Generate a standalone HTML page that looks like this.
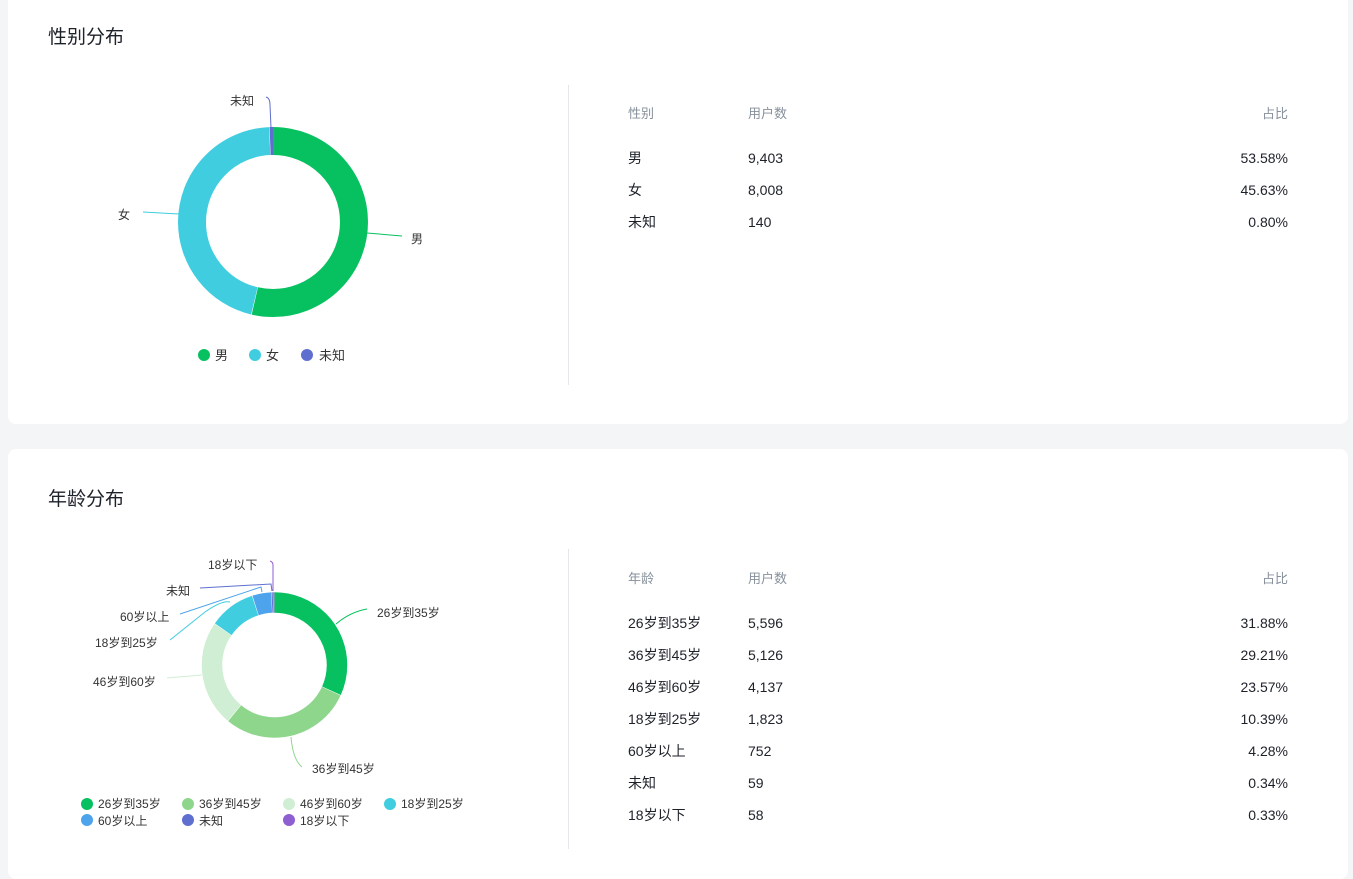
<!DOCTYPE html>
<html><head><meta charset="utf-8"><style>
body{margin:0;background:#f4f5f7;font-family:"Liberation Sans","Noto Sans CJK SC",sans-serif;width:1353px;height:868px;overflow:hidden;position:relative}
.card{position:absolute;left:8px;width:1340px;background:#fff;border-radius:8px}
.t{position:absolute;left:40px;font-size:19px;color:#1d2129}
.div{position:absolute;left:560px;width:1px;background:#e5e6eb}
.tb{position:absolute;left:620px;width:660px;font-size:14px;color:#1d2129}
.r{position:absolute;left:0;width:660px;height:20px;line-height:20px}
.r span{position:absolute}
.r .a{left:0}.r .b{left:120px}.r .c{right:0}
.h{color:#86909c;font-size:13px}
svg{position:absolute;left:0;top:0}
svg text{font-family:"Liberation Sans","Noto Sans CJK SC",sans-serif;font-size:12px;fill:#333}
</style></head><body>
<div class="card" style="top:-10px;height:434px">
<div class="t" style="top:32px">性别分布</div>
<div class="div" style="top:95px;height:300px"></div>
<div class="tb" style="top:114px">
<div class="r h" style="top:0"><span class="a">性别</span><span class="b">用户数</span><span class="c">占比</span></div>
<div class="r" style="top:44px"><span class="a">男</span><span class="b">9,403</span><span class="c">53.58%</span></div>
<div class="r" style="top:76px"><span class="a">女</span><span class="b">8,008</span><span class="c">45.63%</span></div>
<div class="r" style="top:108px"><span class="a">未知</span><span class="b">140</span><span class="c">0.80%</span></div>
</div>
</div>
<div class="card" style="top:449px;height:430px">
<div class="t" style="top:35px">年龄分布</div>
<div class="div" style="top:100px;height:300px"></div>
<div class="tb" style="top:120px">
<div class="r h" style="top:0"><span class="a">年龄</span><span class="b">用户数</span><span class="c">占比</span></div>
<div class="r" style="top:44px"><span class="a">26岁到35岁</span><span class="b">5,596</span><span class="c">31.88%</span></div>
<div class="r" style="top:76px"><span class="a">36岁到45岁</span><span class="b">5,126</span><span class="c">29.21%</span></div>
<div class="r" style="top:108px"><span class="a">46岁到60岁</span><span class="b">4,137</span><span class="c">23.57%</span></div>
<div class="r" style="top:140px"><span class="a">18岁到25岁</span><span class="b">1,823</span><span class="c">10.39%</span></div>
<div class="r" style="top:172px"><span class="a">60岁以上</span><span class="b">752</span><span class="c">4.28%</span></div>
<div class="r" style="top:204px"><span class="a">未知</span><span class="b">59</span><span class="c">0.34%</span></div>
<div class="r" style="top:236px"><span class="a">18岁以下</span><span class="b">58</span><span class="c">0.33%</span></div>
</div>
</div>
<svg width="1353" height="868">
<g transform="rotate(-90 273 222)" fill="none" stroke-width="28">
<circle cx="273" cy="222" r="81" stroke="#07c160" stroke-dasharray="272.7 508.9" stroke-dashoffset="0"/>
<circle cx="273" cy="222" r="81" stroke="#40cde0" stroke-dasharray="232.2 508.9" stroke-dashoffset="-273.2"/>
<circle cx="273" cy="222" r="81" stroke="#5f6fcf" stroke-dasharray="3.1 508.9" stroke-dashoffset="-505.8"/>
</g>
<path d="M367 233 L402 236" stroke="#07c160" fill="none"/>
<path d="M179 214 L143 212" stroke="#40cde0" fill="none"/>
<path d="M271 128 L270 105 Q270 98 266 97" stroke="#5f6fcf" fill="none"/>
<text x="411" y="243">男</text><text x="118" y="219">女</text><text x="230" y="105">未知</text>
<circle cx="204" cy="355" r="6" fill="#07c160"/><text x="215" y="360" style="font-size:13px">男</text>
<circle cx="255" cy="355" r="6" fill="#40cde0"/><text x="266" y="360" style="font-size:13px">女</text>
<circle cx="307" cy="355" r="6" fill="#5f6fcf"/><text x="319" y="360" style="font-size:13px">未知</text>

<g transform="rotate(-90 274.5 665)" fill="none" stroke-width="20.5">
<circle cx="274.5" cy="665" r="62.5" stroke="#07c160" stroke-dasharray="124.7 392.7"/>
<circle cx="274.5" cy="665" r="62.5" stroke="#8fd68d" stroke-dasharray="114.2 392.7" stroke-dashoffset="-125.2"/>
<circle cx="274.5" cy="665" r="62.5" stroke="#d0eed3" stroke-dasharray="92.1 392.7" stroke-dashoffset="-239.9"/>
<circle cx="274.5" cy="665" r="62.5" stroke="#40cde0" stroke-dasharray="40.3 392.7" stroke-dashoffset="-332.5"/>
<circle cx="274.5" cy="665" r="62.5" stroke="#4ea4ec" stroke-dasharray="16.3 392.7" stroke-dashoffset="-373.3"/>
<circle cx="274.5" cy="665" r="62.5" stroke="#5f6fcf" stroke-dasharray="1.0 392.7" stroke-dashoffset="-390"/>
<circle cx="274.5" cy="665" r="62.5" stroke="#8e5fd0" stroke-dasharray="1.0 392.7" stroke-dashoffset="-391.4"/>
</g>
<path d="M336 624 Q350 612 367 609" stroke="#07c160" fill="none"/>
<path d="M291 737 Q293 760 302 767" stroke="#8fd68d" fill="none"/>
<path d="M202 675 L167 678" stroke="#d0eed3" fill="none"/>
<path d="M230 602 Q222 600 205 612 L170 640" stroke="#40cde0" fill="none"/>
<path d="M262 592 L261 587 L180 614" stroke="#4ea4ec" fill="none"/>
<path d="M272 591 L271 584 L200 588" stroke="#5f6fcf" fill="none"/>
<path d="M273 591 L273 565 Q273 562 270 561" stroke="#8e5fd0" fill="none"/>
<text x="377" y="617">26岁到35岁</text><text x="312" y="773">36岁到45岁</text>
<text x="93" y="686">46岁到60岁</text><text x="95" y="647">18岁到25岁</text>
<text x="120" y="621">60岁以上</text><text x="166" y="595">未知</text><text x="208" y="569">18岁以下</text>
<g style="font-size:12px">
<circle cx="87" cy="804" r="6" fill="#07c160"/><text x="98" y="808">26岁到35岁</text>
<circle cx="188" cy="804" r="6" fill="#8fd68d"/><text x="199" y="808">36岁到45岁</text>
<circle cx="289" cy="804" r="6" fill="#d0eed3"/><text x="300" y="808">46岁到60岁</text>
<circle cx="390" cy="804" r="6" fill="#40cde0"/><text x="401" y="808">18岁到25岁</text>
<circle cx="87" cy="820" r="6" fill="#4ea4ec"/><text x="98" y="825">60岁以上</text>
<circle cx="188" cy="820" r="6" fill="#5f6fcf"/><text x="199" y="825">未知</text>
<circle cx="289" cy="820" r="6" fill="#8e5fd0"/><text x="300" y="825">18岁以下</text>
</g>
</svg>
</body></html>
